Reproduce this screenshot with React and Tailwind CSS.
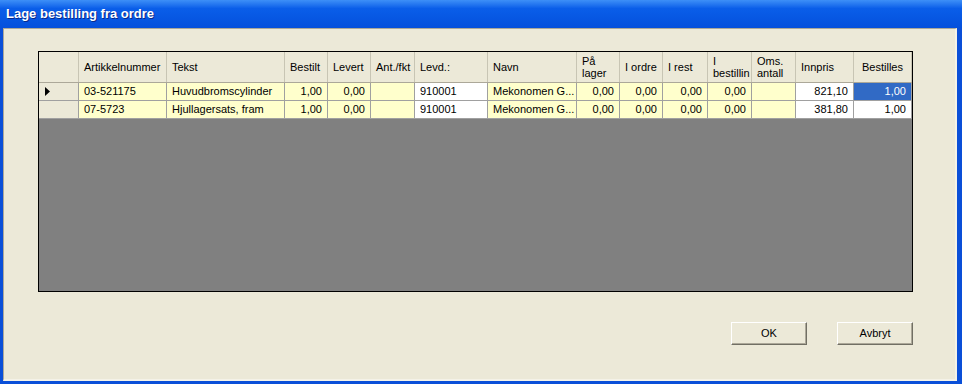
import React from "react";

const columns = [
  { key: "art", label: "Artikkelnummer", w: "w-[88px]" },
  { key: "tekst", label: "Tekst", w: "w-[118px]" },
  { key: "bestilt", label: "Bestilt", w: "w-[43px]", num: true },
  { key: "levert", label: "Levert", w: "w-[43px]", num: true },
  { key: "ant", label: "Ant./fkt", w: "w-[44px]", num: true },
  { key: "levd", label: "Levd.:", w: "w-[73px]", white: true },
  { key: "navn", label: "Navn", w: "w-[89px]" },
  { key: "lager", label: ["På", "lager"], w: "w-[43px]", num: true },
  { key: "iordre", label: "I ordre", w: "w-[43px]", num: true },
  { key: "irest", label: "I rest", w: "w-[45px]", num: true },
  { key: "ibest", label: ["I", "bestillin"], w: "w-[44px]", num: true },
  { key: "oms", label: ["Oms.", "antall"], w: "w-[44px]", num: true },
  { key: "innpris", label: "Innpris", w: "w-[58px]", num: true, white: true },
  { key: "bestilles", label: "Bestilles", w: "w-[58px]", num: true, white: true },
];

const rows = [
  {
    art: "03-521175",
    tekst: "Huvudbromscylinder",
    bestilt: "1,00",
    levert: "0,00",
    ant: "",
    levd: "910001",
    navn: "Mekonomen G...",
    lager: "0,00",
    iordre: "0,00",
    irest: "0,00",
    ibest: "0,00",
    oms: "",
    innpris: "821,10",
    bestilles: "1,00",
  },
  {
    art: "07-5723",
    tekst: "Hjullagersats, fram",
    bestilt: "1,00",
    levert: "0,00",
    ant: "",
    levd: "910001",
    navn: "Mekonomen G...",
    lager: "0,00",
    iordre: "0,00",
    irest: "0,00",
    ibest: "0,00",
    oms: "",
    innpris: "381,80",
    bestilles: "1,00",
  },
];

const XpButton = ({ children }) => (
  <button className="w-[76px] h-[23px] bg-[#ece9d8] border border-t-white border-l-white border-r-[#716f64] border-b-[#716f64] shadow-[inset_-1px_-1px_0_#aca899] text-[11px] text-black">
    {children}
  </button>
);

const App = () => {
  return (
    <div
      className="w-[962px] h-[384px] bg-[#0a4fd8] flex flex-col overflow-hidden"
      style={{ fontFamily: "'Liberation Sans', Arial, sans-serif" }}
    >
      <div className="h-[28px] shrink-0 bg-gradient-to-b from-[#3d8ff7] via-[#0a5ee9] via-30% to-[#0550dc] flex items-center pl-[6px]">
        <span className="text-white font-bold text-[13px] [text-shadow:1px_1px_0_#0a2a8a]">
          Lage bestilling fra ordre
        </span>
      </div>

      <div className="flex-1 ml-[3px] mr-[5px] mb-[3px] bg-[#ece9d8] border-t border-l border-[#aca899] border-r-[2px] border-r-[#f4f2e8] border-b-[2px] border-b-[#f4f2e8] pl-[34px] pt-[22px]">
        <div className="w-[875px] h-[241px] border border-black bg-[#808080] flex flex-col text-[11px] text-black">
          <div className="h-[31px] flex bg-[#ece9d8] border-b border-[#aca899]">
            <div className="w-[40px] border-r border-[#c8c5b4]" />
            {columns.map((c) => (
              <div
                key={c.key}
                className={`${c.w} border-r border-[#c8c5b4] flex items-center leading-[12px] ${c.key === "bestilles" ? "pl-[8px]" : "pl-[5px]"} overflow-hidden whitespace-nowrap`}
              >
                {Array.isArray(c.label) ? (
                  <div className="flex flex-col">
                    <span>{c.label[0]}</span>
                    <span>{c.label[1]}</span>
                  </div>
                ) : (
                  <span>{c.label}</span>
                )}
              </div>
            ))}
          </div>

          {rows.map((r, i) => (
            <div key={i} className="h-[18px] flex border-b border-[#a0a0a0]">
              <div className="w-[40px] bg-[#ece9d8] border-r border-[#a0a0a0] flex items-center pl-[6px]">
                {i === 0 && (
                  <svg width="5" height="9" viewBox="0 0 5 9">
                    <path d="M0 0 L5 4.5 L0 9 Z" fill="#000" />
                  </svg>
                )}
              </div>
              {columns.map((c) => {
                const selected = i === 0 && c.key === "bestilles";
                const bg = selected
                  ? "bg-[#316ac5] text-white"
                  : c.white
                  ? "bg-white"
                  : "bg-[#ffffcc]";
                return (
                  <div
                    key={c.key}
                    className={`${c.w} ${bg} border-r border-[#a0a0a0] flex items-center overflow-hidden whitespace-nowrap ${c.num ? "justify-end pr-[5px]" : "pl-[5px]"}`}
                  >
                    {r[c.key]}
                  </div>
                );
              })}
            </div>
          ))}
        </div>

        <div className="w-[875px] flex justify-end gap-[30px] mt-[30px]">
          <XpButton>OK</XpButton>
          <XpButton>Avbryt</XpButton>
        </div>
      </div>
    </div>
  );
};

export default App;
